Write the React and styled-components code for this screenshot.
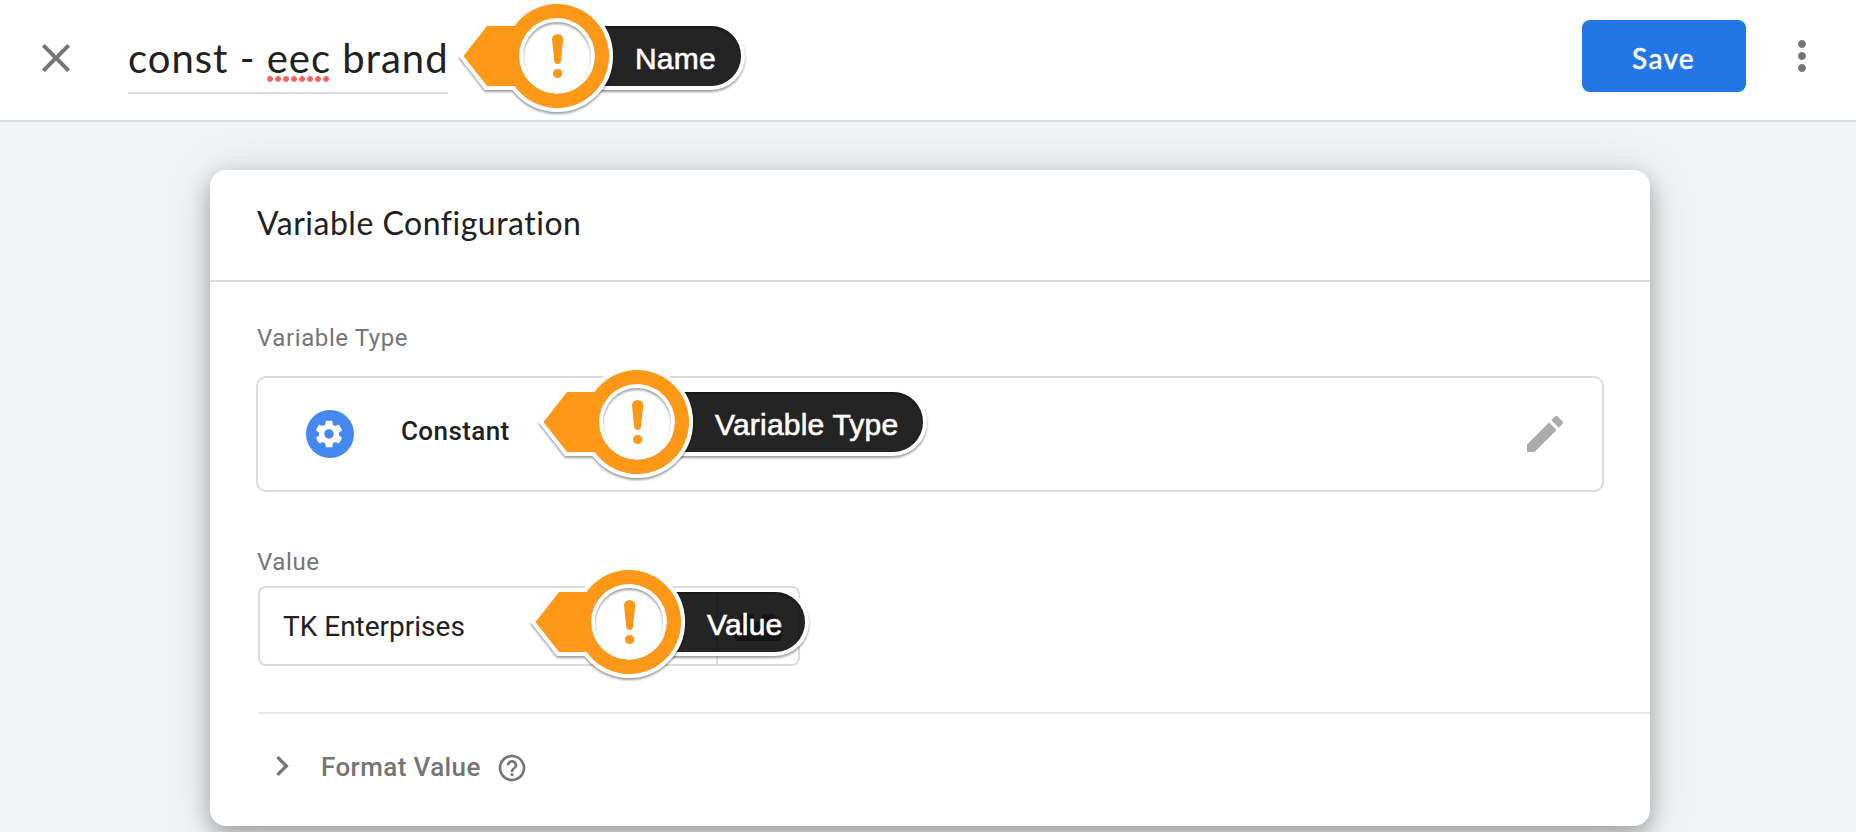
import React from "react";
import styled, { createGlobalStyle } from "styled-components";

const Global = createGlobalStyle`
  *, *::before, *::after { box-sizing: border-box; }
  body { margin: 0; background: #f1f3f4; overflow: hidden; }
`;

const display = `Lato, "Open Sans", sans-serif`;

const Page = styled.div`
  position: relative;
  width: 1856px;
  height: 832px;
  overflow: hidden;
  background: #f1f3f4;
  color: #212121;
  font-family: Roboto, "Liberation Sans", sans-serif;
`;

const TopBar = styled.header`
  display: flex;
  align-items: flex-start;
  height: 122px;
  padding: 0 30px 0 32px;
  background: #fff;
  border-bottom: 2px solid #dadce0;
`;

const Icon = styled.svg`
  display: block;
  flex: none;
  width: ${(p) => p.$size}px;
  height: ${(p) => p.$size}px;
  fill: ${(p) => p.$color || "#757575"};
`;

const CloseButton = styled.div`
  margin-top: 34px;
`;

const Title = styled.h1`
  width: 320px;
  height: 60px;
  margin: 34px auto 0 48px;
  border-bottom: 2px solid #dadce0;
  font: 400 40px/48px ${display};
  letter-spacing: 1px;
  white-space: nowrap;
`;

const Misspelled = styled.span`
  display: inline-block;
  height: 50px;
  background: radial-gradient(circle at 3px 3px, #ff5f5f 2.5px, transparent 3.2px) 0 42px / 8px 6px repeat-x;
`;

const SaveButton = styled.div`
  display: flex;
  align-items: center;
  justify-content: center;
  width: 164px;
  height: 72px;
  margin: 20px 32px 0 0;
  padding: 4px 1px 0 0;
  border-radius: 8px;
  background: #2276e6;
  color: #fff;
  font: 500 28px/36px ${display};
  letter-spacing: 1.3px;
  -webkit-text-stroke: 0.4px #fff;
`;

const MenuButton = styled.div`
  margin-top: 32px;
`;

const Card = styled.section`
  width: 1440px;
  height: 656px;
  margin: 48px 0 0 210px;
  border-radius: 16px;
  background: #fff;
  box-shadow: 0 10px 20px rgba(0, 0, 0, 0.24), 0 4px 44px rgba(0, 0, 0, 0.17);
`;

const CardHeader = styled.h2`
  height: 112px;
  margin: 0;
  padding: 33px 48px 0 47px;
  border-bottom: 2px solid #dadce0;
  font: 400 32px/40px ${display};
  letter-spacing: 0.5px;
`;

const CardBody = styled.div`
  padding: 0 0 0 48px;
`;

const Label = styled.div`
  margin-left: -1px;
  padding-top: ${(p) => p.$top}px;
  color: #757575;
  font-size: 24px;
  line-height: 32px;
  letter-spacing: 0.6px;
`;

const TypeBox = styled.div`
  display: flex;
  align-items: center;
  width: 1348px;
  height: 116px;
  margin: 22px 0 0 -2px;
  padding: 0 33px 0 48px;
  border: 2px solid #dadce0;
  border-radius: 10px;
`;

const TypeBadge = styled.div`
  display: flex;
  align-items: center;
  justify-content: center;
  width: 48px;
  height: 48px;
  margin-right: 47px;
  padding-right: 2px;
  border-radius: 50%;
  background: #4688f1;
`;

const TypeName = styled.div`
  flex: 1;
  margin-top: -6px;
  font-size: 26px;
  font-weight: 500;
  line-height: 36px;
  letter-spacing: 0.4px;
`;

const ValueField = styled.div`
  display: flex;
  width: 542px;
  height: 80px;
  margin-top: 8px;
  border: 2px solid #dadce0;
  border-radius: 8px;
`;

const ValueText = styled.div`
  flex: 1;
  padding-left: 23px;
  font-size: 28px;
  line-height: 78px;
`;

const VariablePicker = styled.div`
  display: flex;
  align-items: center;
  justify-content: center;
  width: 82px;
  border-left: 2px solid #dadce0;
`;

const FormatRow = styled.div`
  display: flex;
  align-items: flex-start;
  margin-top: 46px;
  padding: 32px 0 0 4px;
  border-top: 2px solid #e8e8ec;
  color: #757575;
  font-size: 26px;
  font-weight: 500;
  letter-spacing: 0.4px;
`;

const FormatText = styled.span`
  margin: 1px 15px 0 19px;
  line-height: 40px;
`;

const HelpIcon = styled(Icon)`
  margin-top: 6px;
`;

const CalloutRoot = styled.div`
  position: absolute;
  left: ${(p) => p.$x}px;
  top: ${(p) => p.$y}px;
  height: 120px;
  padding: 38.5px 0 0 175px;
  color: #fff;
  font: 400 30px/40px "Liberation Sans", Arial, sans-serif;
  letter-spacing: 0.2px;
  -webkit-text-stroke: 0.6px #fff;
  white-space: nowrap;
`;

const CalloutArt = styled.svg`
  position: absolute;
  left: 0;
  top: 0;
  overflow: visible;

  .shadowed { filter: drop-shadow(0 2px 1px rgba(0, 0, 0, 0.38)); }
`;

const CalloutText = styled.span`
  position: relative;
`;

const marker = "M3.5 56L27 26H54.6A52 52 0 1 1 54.6 86H27Z";

function Callout({ x, y, end, children }) {
  const e = end - 30;
  return (
    <CalloutRoot $x={x} $y={y}>
      <CalloutArt width={end + 6} height="120">
        <path className="shadowed" d={`M130 24H${e}a32 32 0 0 1 0 64H130`} fill="none" stroke="#fff" strokeWidth="4" />
        <path d={`M130 26H${e}a30 30 0 0 1 0 60H130Z`} fill="#000" fillOpacity=".86" />
        <path className="shadowed" d={marker} fill="#fff" stroke="#fff" strokeWidth="8" />
        <circle className="shadowed" cx="97" cy="56" r="36" fill="none" stroke="#fff" strokeWidth="4" />
        <path d={`${marker}M97 18a38 38 0 1 0 0 76a38 38 0 1 0 0-76Z`} fill="#ff9717" fillRule="evenodd" />
        <path d="M92 39.5a5.6 5.6 0 0 1 11.2 0L101 60.5a3.4 3.4 0 0 1-6.8 0Z" fill="#ff9717" />
        <circle cx="97.6" cy="73.5" r="4.6" fill="#ff9717" />
      </CalloutArt>
      <CalloutText>{children}</CalloutText>
    </CalloutRoot>
  );
}

export default function App() {
  return (
    <Page>
      <Global />
      <TopBar>
        <CloseButton>
          <Icon $size={48} viewBox="0 0 24 24">
            <path d="M19 6.41L17.59 5 12 10.59 6.41 5 5 6.41 10.59 12 5 17.59 6.41 19 12 13.41 17.59 19 19 17.59 13.41 12z" />
          </Icon>
        </CloseButton>
        <Title>
          const - <Misspelled>eec</Misspelled> brand
        </Title>
        <SaveButton>Save</SaveButton>
        <MenuButton>
          <Icon $size={48} viewBox="0 0 24 24">
            <path d="M12 8c1.1 0 2-.9 2-2s-.9-2-2-2-2 .9-2 2 .9 2 2 2zm0 2c-1.1 0-2 .9-2 2s.9 2 2 2 2-.9 2-2-.9-2-2-2zm0 6c-1.1 0-2 .9-2 2s.9 2 2 2 2-.9 2-2-.9-2-2-2z" />
          </Icon>
        </MenuButton>
      </TopBar>
      <Card>
        <CardHeader>Variable Configuration</CardHeader>
        <CardBody>
          <Label $top={40}>Variable Type</Label>
          <TypeBox>
            <TypeBadge>
              <Icon $size={32} $color="#fff" viewBox="0 0 24 24">
                <path d="M19.43 12.98c.04-.32.07-.64.07-.98s-.03-.66-.07-.98l2.11-1.65c.19-.15.24-.42.12-.64l-2-3.46c-.12-.22-.39-.3-.61-.22l-2.49 1c-.52-.4-1.08-.73-1.69-.98l-.38-2.65C14.46 2.18 14.25 2 14 2h-4c-.25 0-.46.18-.49.42l-.38 2.65c-.61.25-1.17.59-1.69.98l-2.49-1c-.23-.09-.49 0-.61.22l-2 3.46c-.13.22-.07.49.12.64l2.11 1.65c-.04.32-.07.65-.07.98s.03.66.07.98l-2.11 1.65c-.19.15-.24.42-.12.64l2 3.46c.12.22.39.3.61.22l2.49-1c.52.4 1.08.73 1.69.98l.38 2.65c.03.24.24.42.49.42h4c.25 0 .46-.18.49-.42l.38-2.65c.61-.25 1.17-.59 1.69-.98l2.49 1c.23.09.49 0 .61-.22l2-3.46c.12-.22.07-.49-.12-.64l-2.11-1.65zM12 15.5c-1.93 0-3.5-1.57-3.5-3.5s1.57-3.5 3.5-3.5 3.5 1.57 3.5 3.5-1.57 3.5-3.5 3.5z" />
              </Icon>
            </TypeBadge>
            <TypeName>Constant</TypeName>
            <Icon $size={48} $color="#ababab" viewBox="0 0 24 24">
              <path d="M3 17.25V21h3.75L17.81 9.94l-3.75-3.75L3 17.25zM20.71 7.04c.39-.39.39-1.02 0-1.41l-2.34-2.34c-.39-.39-1.02-.39-1.41 0l-1.83 1.83 3.75 3.75 1.83-1.83z" />
            </Icon>
          </TypeBox>
          <Label $top={54}>Value</Label>
          <ValueField>
            <ValueText>TK Enterprises</ValueText>
            <VariablePicker>
              <Icon $size={46} $color="#929292" viewBox="0 0 46 46">
                <path d="M0 19H6V11H19V19H27V11H40V19H46V38H0Z" />
              </Icon>
            </VariablePicker>
          </ValueField>
          <FormatRow>
            <Icon $size={40} viewBox="0 0 24 24">
              <path d="M10 6L8.59 7.41 13.17 12l-4.58 4.59L10 18l6-6z" />
            </Icon>
            <FormatText>Format Value</FormatText>
            <HelpIcon $size={32} viewBox="0 0 24 24">
              <path d="M11 18h2v-2h-2v2zm1-16C6.48 2 2 6.48 2 12s4.48 10 10 10 10-4.48 10-10S17.52 2 12 2zm0 18c-4.41 0-8-3.59-8-8s3.59-8 8-8 8 3.59 8 8-3.59 8-8 8zm0-14c-2.21 0-4 1.79-4 4h2c0-1.1.9-2 2-2s2 .9 2 2c0 2-3 1.75-3 5h2c0-2.25 3-2.5 3-5 0-2.21-1.79-4-4-4z" />
            </HelpIcon>
          </FormatRow>
        </CardBody>
      </Card>
      <Callout x={460} y={0} end={281}>Name</Callout>
      <Callout x={540} y={366} end={383}>Variable Type</Callout>
      <Callout x={532} y={566} end={273}>Value</Callout>
    </Page>
  );
}
